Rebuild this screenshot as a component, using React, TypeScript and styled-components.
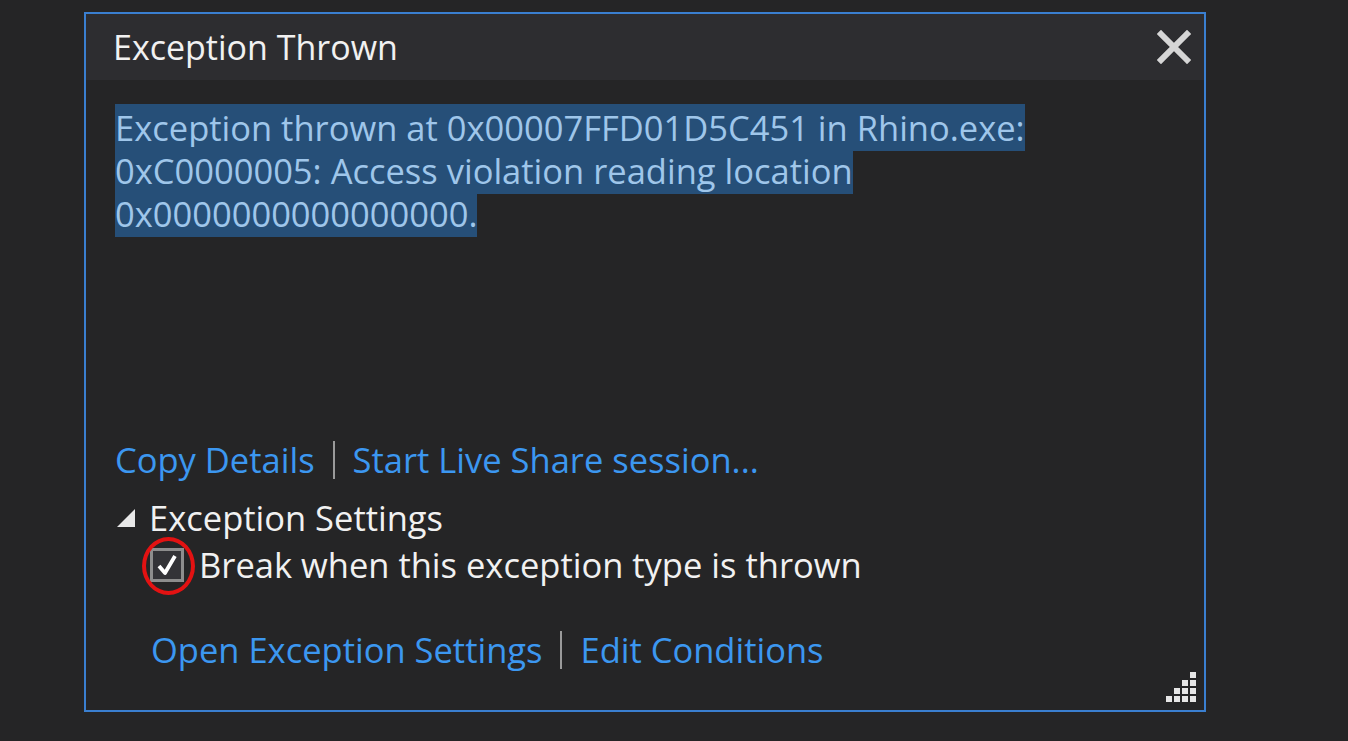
import styled, { createGlobalStyle } from "styled-components";

const Global = createGlobalStyle`
  html, body {
    margin: 0;
    background: #252526;
  }
  body {
    font-family: "Open Sans", "Noto Sans", sans-serif;
  }
`;

const Page = styled.div`
  width: 1348px;
  height: 741px;
  padding: 12px 0 0 84px;
  box-sizing: border-box;
  background: #252526;
  overflow: hidden;
`;

const Dialog = styled.div`
  width: 1122px;
  height: 700px;
  box-sizing: border-box;
  border: 2px solid #3a7fd0;
  background: #252526;
  display: flex;
  flex-direction: column;
  position: relative;
`;

const Header = styled.div`
  height: 66px;
  background: #2d2d30;
  display: flex;
  align-items: center;
  justify-content: space-between;
  padding: 0 10px 0 27px;
`;

const Title = styled.h1`
  margin: 0;
  font-size: 34px;
  font-weight: 400;
  color: #f1f1f1;
`;

const Close = styled.button`
  border: none;
  background: none;
  padding: 0;
  width: 40px;
  height: 40px;
  display: flex;
  align-items: center;
  justify-content: center;
`;

const Body = styled.div`
  flex: 1;
  display: flex;
  flex-direction: column;
  padding: 26px 0 0 29px;
`;

const Message = styled.p`
  margin: 0;
  width: 1000px;
  font-size: 34.5px;
  line-height: 43px;
  color: #9fc6ea;
  span {
    background: #264f78;
  }
`;

const LinkRow = styled.div<{ $indent?: number; $top: number }>`
  display: flex;
  align-items: center;
  margin-top: ${(p) => p.$top}px;
  padding-left: ${(p) => p.$indent ?? 0}px;
  font-size: 34.5px;
  line-height: 43px;
`;

const Link = styled.a`
  color: #3c97f0;
  text-decoration: none;
  cursor: pointer;
`;

const Divider = styled.span`
  width: 2px;
  height: 38px;
  background: #9a9a9a;
  margin: 0 18px;
`;

const Section = styled.div`
  display: flex;
  align-items: center;
  margin-top: 15px;
  font-size: 34.5px;
  line-height: 43px;
  color: #f1f1f1;
`;

const Caret = styled.span`
  width: 0;
  height: 0;
  border-left: 18px solid transparent;
  border-bottom: 18px solid #e8e8e8;
  margin: 0 14px 0 2px;
`;

const CheckRow = styled.label`
  display: flex;
  align-items: center;
  margin-top: 4px;
  margin-left: 35px;
  font-size: 34.5px;
  line-height: 43px;
  color: #f1f1f1;
`;

const CheckWrap = styled.span`
  position: relative;
  width: 34px;
  height: 34px;
  margin-right: 15px;
`;

const Box = styled.span`
  display: flex;
  align-items: center;
  justify-content: center;
  width: 34px;
  height: 34px;
  box-sizing: border-box;
  border: 3px solid #8d8d8d;
  background: #333337;
`;

const Ring = styled.span`
  position: absolute;
  left: -8px;
  top: -11px;
  width: 53px;
  height: 58px;
  box-sizing: border-box;
  border: 4px solid #e31212;
  border-radius: 50%;
`;

const Grip = styled.svg`
  position: absolute;
  right: 6px;
  bottom: 6px;
`;

export default function App() {
  const dots: [number, number][] = [];
  for (let r = 0; r < 4; r++) {
    for (let c = 3 - r; c < 4; c++) dots.push([c * 8, r * 8]);
  }
  return (
    <>
      <Global />
      <Page>
        <Dialog>
          <Header>
            <Title>Exception Thrown</Title>
            <Close aria-label="Close">
              <svg width="34" height="34" viewBox="0 0 34 34">
                <path d="M4 4 L30 30 M30 4 L4 30" stroke="#d6d6d6" strokeWidth="6" strokeLinecap="square" />
              </svg>
            </Close>
          </Header>
          <Body>
            <Message>
              <span>
                Exception thrown at 0x00007FFD01D5C451 in Rhino.exe: 0xC0000005: Access violation reading location
                0x0000000000000000.
              </span>
            </Message>
            <LinkRow $top={203}>
              <Link>Copy Details</Link>
              <Divider />
              <Link>Start Live Share session...</Link>
            </LinkRow>
            <Section>
              <Caret />
              Exception Settings
            </Section>
            <CheckRow>
              <CheckWrap>
                <Box>
                  <svg width="24" height="24" viewBox="0 0 24 24">
                    <path d="M4 13 L10 20 L20 3" fill="none" stroke="#ffffff" strokeWidth="3.8" strokeLinejoin="round" />
                  </svg>
                </Box>
                <Ring />
              </CheckWrap>
              Break when this exception type is thrown
            </CheckRow>
            <LinkRow $top={42} $indent={36}>
              <Link>Open Exception Settings</Link>
              <Divider />
              <Link>Edit Conditions</Link>
            </LinkRow>
          </Body>
          <Grip width="32" height="32" viewBox="0 0 32 32">
            {dots.map(([x, y]) => (
              <rect key={`${x}-${y}`} x={x} y={y} width="6" height="6" fill="#e6e6e6" />
            ))}
          </Grip>
        </Dialog>
      </Page>
    </>
  );
}
